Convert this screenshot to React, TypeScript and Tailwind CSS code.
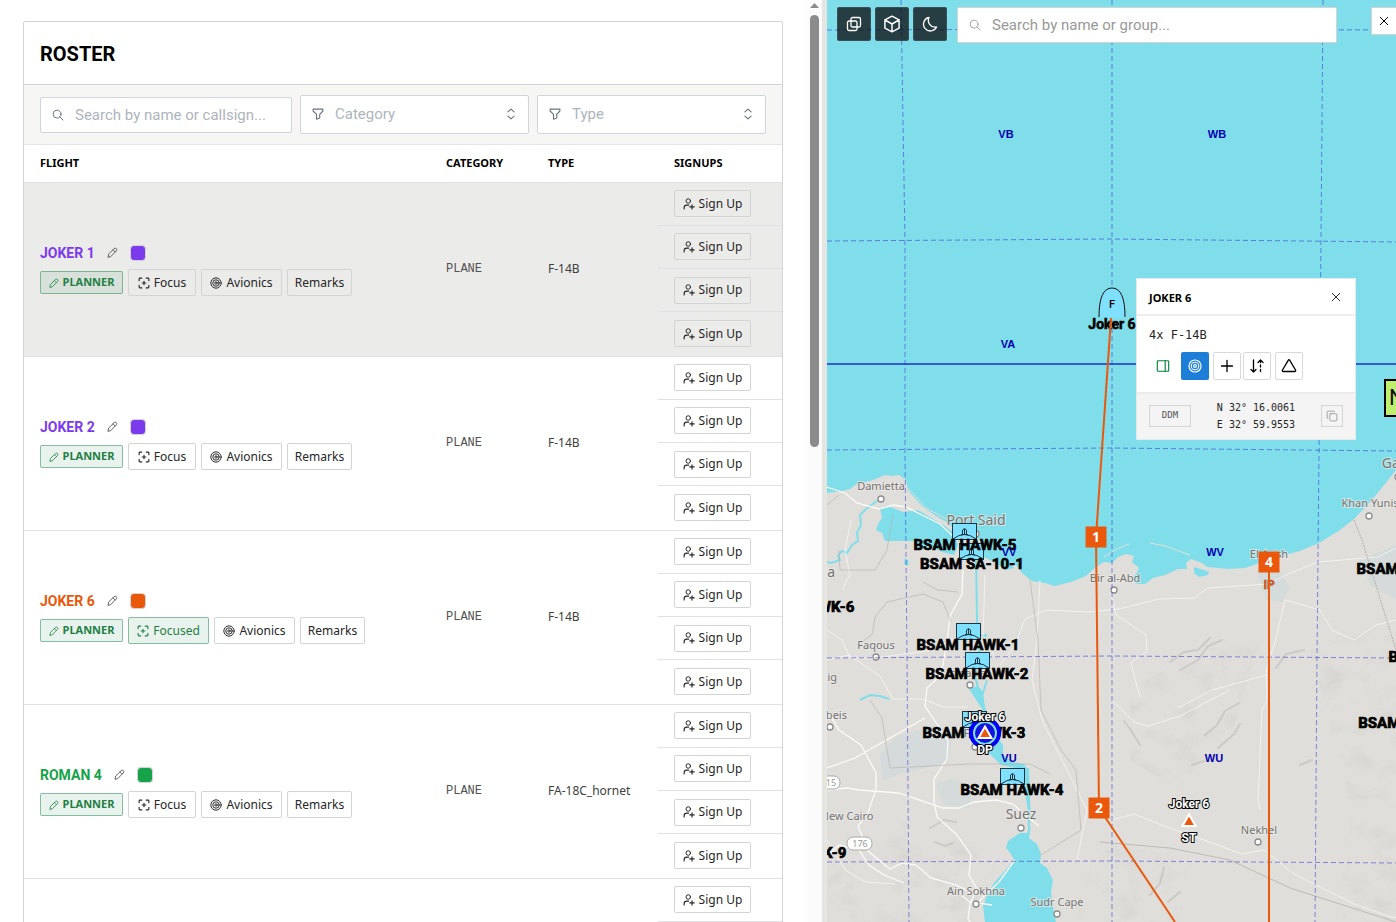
import { useState } from "react";
import type { ReactNode } from "react";

const flights = [
  { name: "JOKER 1", type: "F-14B", text: "text-[#7c3aed]", fill: "bg-[#7c3aed]", hovered: true },
  { name: "JOKER 2", type: "F-14B", text: "text-[#7c3aed]", fill: "bg-[#7c3aed]" },
  { name: "JOKER 6", type: "F-14B", text: "text-[#ea580c]", fill: "bg-[#ea580c]", focused: true },
  { name: "ROMAN 4", type: "FA-18C_hornet", text: "text-[#16a34a]", fill: "bg-[#16a34a]" },
  { name: "ROMAN 5", type: "FA-18C_hornet", text: "text-[#16a34a]", fill: "bg-[#16a34a]" },
];

function Icon({ className, children }: { className: string; children: ReactNode }) {
  return (
    <svg viewBox="0 0 16 16" className={className} fill="none" stroke="currentColor" strokeWidth="1.3" strokeLinecap="round" strokeLinejoin="round" aria-hidden="true">
      {children}
    </svg>
  );
}

const SearchIcon = ({ className }: { className: string }) => (
  <Icon className={className}><circle cx="6.8" cy="6.8" r="5.3" /><path d="M10.7 10.7l4 4" /></Icon>
);

const PencilIcon = ({ className }: { className: string }) => (
  <Icon className={className}>
    <path d="M1.500 14.500l1-4.400 7.900-7.700a2.200 2.200 0 0 1 3.100 0l.1.100a2.200 2.200 0 0 1 0 3.100l-7.700 7.900z" />
    <path d="M8.800 4.200l3 3" />
  </Icon>
);

const FocusIcon = () => (
  <Icon className="size-3">
    <path strokeWidth="1.500" d="M1.500 5V2.600q0-1.100 1.100-1.100H5M11 1.500h2.400q1.100 0 1.100 1.100V5M14.500 11v2.400q0 1.100-1.100 1.100H11M5 14.500H2.600q-1.100 0-1.100-1.100V11M8 5.600v4.800M5.600 8h4.800" />
  </Icon>
);

const RadarIcon = ({ className }: { className: string }) => (
  <Icon className={className}><circle cx="8" cy="8" r="6.9" /><circle cx="8" cy="8" r="4.3" /><circle cx="8" cy="8" r="1.6" /></Icon>
);

const UserPlusIcon = () => (
  <Icon className="size-3">
    <circle cx="7" cy="4" r="3" />
    <path strokeWidth="1.500" d="M1.500 14.500v-1.500q0-3.500 3.500-3.500h2.500M12 9v5.800M9.100 11.900h5.800" />
  </Icon>
);

const CloseIcon = ({ className }: { className: string }) => (
  <Icon className={className}><path d="M3 3l10 10M13 3L3 13" /></Icon>
);

function FilterSelect({ label }: { label: string }) {
  return (
    <div className="relative w-[229px]">
      <Icon className="pointer-events-none absolute left-3 top-[13px] size-3 text-gray-500">
        <path strokeWidth="1.500" d="M1.500 1.500h13v2.500L10.300 8.400v4.800L6 15V8.400L1.500 4z" />
      </Icon>
      <select aria-label={label} className="h-[39px] w-full appearance-none rounded-xs border border-[#d1d5db] bg-white pl-[34px] pr-8 text-[15px] text-[#adb5bd] outline-none">
        <option>{label}</option>
      </select>
      <Icon className="pointer-events-none absolute right-[11px] top-3 size-3.5 text-gray-500">
        <path d="M4.500 5.500L8 2.500l3.500 3M4.500 10.500L8 13.500l3.500-3" />
      </Icon>
    </div>
  );
}

const actionButton = "flex h-[27px] items-center justify-center gap-1 rounded-xs border text-xs";

function FlightCell({ flight }: { flight: (typeof flights)[number] }) {
  return (
    <div className="flex flex-col gap-1.5">
      <div className="flex h-[21px] items-center">
        <span className={`font-[Roboto,sans-serif] text-sm font-bold ${flight.text}`}>{flight.name}</span>
        <button type="button" aria-label={`Rename ${flight.name}`} className="mx-3 text-neutral-600"><PencilIcon className="size-[11px]" /></button>
        <button type="button" aria-label={`Colour of ${flight.name}`} className={`size-4 rounded-[4px] border border-neutral-300 ${flight.fill}`} />
      </div>
      <div className="flex items-center gap-[5px] text-neutral-800">
        <span className="flex h-[23px] w-[83px] items-center justify-center gap-1 rounded-xs border border-[#238551]/50 bg-[#238551]/10 text-[11px] font-bold text-[#1f7f45]">
          <PencilIcon className="size-2.5" />
          PLANNER
        </span>
        {flight.focused ? (
          <button type="button" className={`${actionButton} w-[81px] border-[#238551]/50 bg-[#238551]/10 text-[#1f7f45]`}><FocusIcon />Focused</button>
        ) : (
          <button type="button" className={`${actionButton} w-[68px] border-neutral-300`}><FocusIcon />Focus</button>
        )}
        <button type="button" className={`${actionButton} w-[81px] border-neutral-300`}><RadarIcon className="size-3" />Avionics</button>
        <button type="button" className={`${actionButton} w-[65px] border-neutral-300`}>Remarks</button>
      </div>
    </div>
  );
}

function Roster() {
  const [query, setQuery] = useState("");
  return (
    <section className="ml-[23px] mr-6 mt-[21px] rounded-xs border border-neutral-300">
      <h1 className="flex h-[63px] items-center border-b border-neutral-300 px-4 pt-0.5 text-xl font-bold text-black">ROSTER</h1>
      <div className="flex h-[60px] items-center gap-2 border-b border-neutral-200 bg-[#f6f6f4] px-4">
        <div className="relative min-w-0 flex-1">
          <SearchIcon className="pointer-events-none absolute left-3 top-3 size-3 text-gray-500" />
          <input aria-label="Search flights" value={query} onChange={(e) => setQuery(e.target.value)} placeholder="Search by name or callsign..." className="h-9 w-full rounded-xs border border-[#d1d5db] bg-white pl-[34px] text-[15px] outline-none placeholder:text-[#adb5bd]" />
        </div>
        <FilterSelect label="Category" />
        <FilterSelect label="Type" />
      </div>
      <table className="w-full table-fixed border-collapse text-left font-['Noto_Sans',sans-serif]">
        <thead>
          <tr className="h-[37px] border-b border-[#dfe1e5] text-[11px] text-black">
            <th className="pl-4">FLIGHT</th>
            <th className="w-[102px] pl-4">CATEGORY</th>
            <th className="w-[126px] pl-4">TYPE</th>
            <th className="w-[124px] pl-4">SIGNUPS</th>
          </tr>
        </thead>
        <tbody>
          {flights.map((flight) => (
            <tr key={flight.name} className={flight.hovered ? "border-b border-[#dfe1e5] bg-[#ebebea]" : "border-b border-[#dfe1e5]"}>
              <td className="pl-4"><FlightCell flight={flight} /></td>
              <td className="pl-4 font-['Liberation_Mono',monospace] text-xs text-neutral-600">PLANE</td>
              <td className="pl-4 text-xs text-neutral-700">{flight.type}</td>
              <td className="p-0">
                <ul className="grid h-[173px] grid-rows-4 divide-y divide-[#dfe1e5]">
                  {[1, 2, 3, 4].map((slot) => (
                    <li key={slot} className="flex items-center pl-4">
                      <button type="button" className="flex h-[27px] w-[77px] items-center justify-center gap-1 rounded-xs border border-neutral-300 text-xs text-neutral-800">
                        <UserPlusIcon />
                        Sign Up
                      </button>
                    </li>
                  ))}
                </ul>
              </td>
            </tr>
          ))}
        </tbody>
      </table>
    </section>
  );
}

const gridLabels: [string, number, number][] = [
  ["VB", 1006, 138], ["WB", 1217, 138], ["VA", 1008, 348], ["VV", 1009, 556],
  ["WV", 1215, 556], ["VU", 1009, 762], ["WU", 1214, 762],
];

const towns: { name: string; x: number; y: number; big?: boolean; dot?: [number, number] }[] = [
  { name: "Damietta", x: 881, y: 490, dot: [881, 499] },
  { name: "Port Said", x: 976, y: 525, big: true, dot: [976, 534] },
  { name: "Faqous", x: 876, y: 649, dot: [876, 657] },
  { name: "New Cairo", x: 847, y: 820 },
  { name: "Suez", x: 1021, y: 819, big: true, dot: [1021, 828] },
  { name: "Ain Sokhna", x: 976, y: 895, dot: [976, 904] },
  { name: "Sudr Cape", x: 1057, y: 906, dot: [1057, 914] },
  { name: "Bir al-Abd", x: 1115, y: 582, dot: [1114, 590] },
  { name: "El Arish", x: 1269, y: 558 },
  { name: "Khan Yunis", x: 1370, y: 507, dot: [1369, 516] },
  { name: "Gaza", x: 1398, y: 468, big: true, dot: [1398, 477] },
  { name: "Nekhel", x: 1259, y: 834, dot: [1258, 842] },
  { name: "Ismailia", x: 966, y: 677, dot: [970, 685] },
  { name: "Fayed", x: 979, y: 737, dot: [975, 747] },
  { name: "Tanta", x: 817, y: 577, big: true },
  { name: "Zagazig", x: 817, y: 681 },
  { name: "Bilbeis", x: 830, y: 719, dot: [830, 727] },
];

const sites: { name: string; x: number; y: number; box?: [number, number] }[] = [
  { name: "BSAM SA-10-1", x: 972, y: 569, box: [959, 543] },
  { name: "BSAM HAWK-5", x: 965, y: 550, box: [952, 523] },
  { name: "BSAM HAWK-6", x: 803, y: 612 },
  { name: "BSAM HAWK-1", x: 968, y: 650, box: [956, 623] },
  { name: "BSAM HAWK-2", x: 977, y: 679, box: [965, 652] },
  { name: "BSAM HAWK-3", x: 974, y: 738, box: [962, 711] },
  { name: "BSAM HAWK-4", x: 1012, y: 795, box: [1000, 768] },
  { name: "BSAM HAWK-9", x: 795, y: 858 },
  { name: "BSAM HAWK-7", x: 1408, y: 574 },
  { name: "BSAM HAWK-8", x: 1440, y: 662 },
  { name: "BSAM HAWK-10", x: 1414, y: 728 },
];

const waypoints: [string, number, number][] = [["1", 1096, 537], ["2", 1099, 808], ["4", 1269, 562]];

const points: [string, string, number, number, number, number][] = [
  ["Joker 6", "DP", 985, 733, 721, 754],
  ["Joker 6", "ST", 1189, 821, 808, 842],
];

function MapCanvas() {
  return (
    <svg viewBox="827 0 569 922" preserveAspectRatio="xMidYMid slice" className="absolute inset-0 size-full" role="img" aria-label="Theater map">
      <defs>
        <filter id="relief" x="0" y="0" width="100%" height="100%">
          <feTurbulence type="fractalNoise" baseFrequency="0.035 0.045" numOctaves="5" seed="8" />
          <feColorMatrix values="0 0 0 0 0.5  0 0 0 0 0.49  0 0 0 0 0.47  1.2 0 0 0 -0.6" />
          <feComposite in2="SourceGraphic" operator="in" />
        </filter>
      </defs>
      <rect x="827" y="0" width="569" height="922" fill="#80deea" />

      {/* land */}
      <path fill="#e0deda" d="M827 493L842 491 850 489 858 483 870 481 878 478 885 475 892 476 899 475 906 480 908 490 914 497 923 507 936 516 948 523 956 530 970 530 980 541 990 551 1003 558 1015 564 1022 573 1032 581 1045 583 1055 586 1071 582 1086 576 1096 567 1104 562 1112 563 1118 557 1126 554 1134 556 1132 562 1139 568 1136 574 1131 578 1137 584 1145 584 1153 578 1165 575 1178 569 1187 569 1186 563 1191 559 1202 563 1207 567 1228 569 1245 568 1262 562 1285 555 1300 551 1319 543 1340 530 1354 519 1371 501 1385 484 1396 470V922H827z" />
      <path filter="url(#relief)" opacity="0.5" d="M1130 690L1200 650 1260 640 1230 740 1180 790 1130 760zM1310 650L1396 620V922H1330L1350 800zM1100 840L1190 860 1180 922H1070zM900 820L1000 850 980 922H827V880z" />
      <g fill="none" stroke="#c4c2be" strokeWidth="2" strokeLinecap="round" opacity="0.7">
        <path d="M1170 662l14-10 14-2 12-12M1180 670l18-10 10-14 14-6M1276 668l10-14 18-4M1205 735l12-10 8-14 14-8M1218 748l16-14 6-10M1192 765l12-4M1300 765l12-5M1140 745l-10-16-6-8M1150 895l10-12 4-16M1168 902l12-10M930 828l14-8 12 2M935 842l10 4 8-3" />
      </g>

      {/* inland water and the canal */}
      <g fill="#80deea">
        <path d="M880 508L888 506 903 512 918 510 930 517 945 526 954 533 958 545 954 555 942 552 930 546 920 550 915 541H885L882 533 876 530 879 522 882 518z" />
        <path d="M981 545L995 553 1008 558 1014 568 1006 570 994 562 984 557z" />
        <path d="M905 558l4 3-1 5-4-2zM980 635l8-1-3 4zM969 689l9-3 5 6 2 20-5-6-5-8z" />
        <path d="M984 715L994 732 1003 745 1003 755 1012 762 1024 764 1029 771 1030 800 1031 824 1026 800 1025 778 1016 768 1001 765 991 755 982 749 976 744z" />
        <path d="M1020 833L1008 841 1006 848 1011 854 1014 860 1004 872 994 883 988 893 983 906 985 922H1056L1053 907 1051 893 1053 880 1047 868 1040 863 1041 854 1037 844 1029 838 1031 826 1027 833z" />
        <path d="M1194 567l10 3 5 2-1 3-9 2-5-4z" />
      </g>
      <g fill="none" stroke="#80deea">
        <path strokeWidth="2" d="M976 555l1 65 3 35-4 25 7 26 2 12M987 680l-5 16 4 20M1028 768l1 66" />
        <path strokeWidth="2" d="M882 498l-8 5-8 6-6 6 1 10-4 8 1 8-6 4-5 8-5-2-4 5 2 4-9 3-4-1M860 700l10-5 10 1 9 3" />
      </g>
      <g fill="#b9d5da" opacity="0.3">
        <path d="M880 755l15-18 40-12 18 8-5 30-45 10-20 8zM935 784l20-6 18 12-4 18-25-3zM1256 570l18-8 16 25-8 15-16-2zM1360 560l36-15v55l-26-15z" />
      </g>
      <path fill="none" stroke="#e0deda" strokeWidth="1" d="M1104 557l15-9 10-4M1150 543l15 3 25 9M908 488l18 20 26 14" />

      {/* roads */}
      <g fill="none" stroke="#fafaf8" strokeWidth="1.3">
        <path d="M827 487l18 6 12 10 22 6 15-4 12 2 14 7 20 10 15 14M963 570l-1 24-12 22-2 18-5 30-3 12-13 12-2 18 12 18 11 17-1 18-13 20v22l3 16 20 18 14 20-2 20 8 14-7 15-2 15 14 20" />
        <path d="M827 790l20-2 12 2 40 3 44 15h16l15-6 22-2 17 4 13 12 13 10M925 718l-35 20-35 20-28 10M827 710l12 20 22 15 15 28v16l-8 24-10 13 10 25 22 18 12-6 14 2 15 13 25 7 21 10M992 905l-22-3-8-6M976 904l23-22 16-22M827 857l12-12 20 5 10 15 15 10 20 8" />
        <path opacity="0.7" strokeWidth="1" d="M1000 665l15-20 10-26 22-9 40 2 32-3 40-10 35-1 14-10 60-4 20-10 30-12 60-5 30-15 15-28M1110 590l6 25 30 20 1 16-16 12 3 12 6 22M1285 600l-10 42-9 28 1 30-5 10-4 90 2 10M1285 600l35 10 12 20 22 10 22-15 20-5M1112 700l22 22 14 4 32-10 50-26M1112 820l22-6 30 12 40 14 38 14 22-4 30 24 60 30 40 14 12-10M1267 675l-55 15-34 18M1040 580l-3 60-5 40 10 40 30 60 15 30-10 50" />
        <path opacity="0.7" strokeWidth="1" d="M827 630l15 10 8 18 25 0 60-8 18-12M827 840l18 30 20 12 30 2M851 520l-6 30 5 25-8 15M827 660l22-5 30 20 14 24h30l20 8h25M985 575l-2 60 12 22" />
      </g>
      <g fill="none" stroke="#b4b1ab" strokeWidth="1">
        <path opacity="0.6" d="M827 505l12-10M839 550l1 20 35 0 12-20 6-35M857 645l15-10 3-18 12-15 36-8 20 8 8 20M923 582l15 8 20 2M1030 580l8 60 3 70 20 40 15 20 5 60-40 25M870 700l12 18 8 50 80-4 60 0 20 10" />
        <path opacity="0.8" d="M1100 842l70 6 60 12 60 28 106 34" />
        <path strokeDasharray="2 1" d="M1354 520l8 20 20 65 14 45" />
      </g>
      <g fill="#9a9994" fontSize="9" textAnchor="middle" fontFamily="'Noto Sans', sans-serif">
        <rect x="815" y="776" width="25" height="13" rx="6" fill="#fff" stroke="#aaa9a6" />
        <text x="831" y="786">15</text>
        <rect x="847" y="837" width="25" height="13" rx="6" fill="#fff" stroke="#aaa9a6" />
        <text x="860" y="847">176</text>
      </g>

      {/* towns */}
      <g textAnchor="middle" fontFamily="'Noto Sans', sans-serif" fill="#747474">
        {towns.map((t) => (
          <g key={t.name}>
            {t.dot && <circle cx={t.dot[0]} cy={t.dot[1]} r="3" fill="#fff" stroke="#8c8c8c" strokeWidth="1.3" />}
            <text x={t.x} y={t.y} fontSize={t.big ? 14 : 11} stroke="#eceae7" strokeOpacity="0.7" strokeWidth="2" paintOrder="stroke">{t.name}</text>
          </g>
        ))}
      </g>

      {/* MGRS grid */}
      <g fill="none" stroke="#2323cd" strokeOpacity="0.5" strokeDasharray="5 3">
        <path d="M901 0L905 240 905 450 907 658 909 922M1112 0V922M1323 0L1321 240 1319 450 1317 658 1315 922" />
        <path d="M827 30L1112 29 1396 30M827 241L1112 239 1396 242M827 450L1112 448 1396 451M827 658L1112 656 1396 658M827 862L1112 861 1396 863" />
      </g>
      <path d="M827 364H1396" stroke="#1c2fc4" strokeWidth="1.5" />

      {/* air defence sites */}
      {sites.map((s) => s.box && (
        <g key={s.name} transform={`translate(${s.box[0]} ${s.box[1]})`} fill="none" stroke="#1c3540">
          <rect x="0.5" y="0.5" width="24" height="16" fill="#80e0ff" />
          <path d="M1 16q11.500-9 23 0M10.500 11V7q2-3 4 0v4M9 11.500h7M12.500 6v5" />
        </g>
      ))}
      <g textAnchor="middle" fontFamily="Roboto, sans-serif" fontSize="15" fontWeight="800" fill="#000" stroke="#000" strokeWidth="0.6">
        {sites.map((s) => <text key={s.name} x={s.x} y={s.y}>{s.name}</text>)}
      </g>
      <g textAnchor="middle" fontFamily="'Liberation Sans', sans-serif" fontSize="11" fontWeight="700" fill="#0000b0">
        {gridLabels.map(([name, x, y]) => <text key={name} x={x} y={y}>{name}</text>)}
      </g>

      {/* selected flight */}
      <path d="M1099 317q0-29 13-29t13 29" fill="#80e0ff" stroke="#111" />
      <g textAnchor="middle" fontFamily="Roboto, sans-serif" fontWeight="700">
        <text x="1112" y="308" fontSize="11" fontWeight="500">F</text>
        <text x="1112" y="329" fontSize="14" stroke="#000" strokeWidth="0.6">Joker 6</text>
        <text x="1269" y="589" fontSize="12" fill="#ea580c" stroke="#8a5a40" strokeWidth="0.5">IP</text>
      </g>
      <path d="M1111 318L1096 537 1099 808 1175 922M1269 562V922" fill="none" stroke="#ea580c" strokeWidth="2" />
      {waypoints.map(([label, x, y]) => (
        <g key={label} textAnchor="middle" fontFamily="'Noto Sans', sans-serif">
          <rect x={x - 10.5} y={y - 10.5} width="21" height="21" fill="#ea580c" />
          <text x={x} y={y + 5} fontSize="14" fontWeight="700" fill="#fff">{label}</text>
        </g>
      ))}
      <circle cx="985" cy="733" r="14" fill="#80deea" stroke="#0000f5" strokeWidth="4" />
      <circle cx="985" cy="733" r="10" fill="#1414e0" />
      {points.map(([owner, label, x, y, top, bottom]) => (
        <g key={label} textAnchor="middle" fontFamily="Roboto, sans-serif" fontSize="12" fontWeight="700" fill="#fff">
          <path transform={`translate(${x} ${y})`} d="M0-6.500l6.500 11.500H-6.500z" fill="#ea580c" stroke="#fff" strokeWidth="2" />
          <text x={x} y={top} stroke="#000" strokeWidth="2" paintOrder="stroke">{owner}</text>
          <text x={x} y={bottom} stroke="#000" strokeWidth="2" paintOrder="stroke">{label}</text>
        </g>
      ))}
      <rect x="1385" y="380" width="40" height="36" fill="#bef06e" stroke="#000" strokeWidth="2" />
      <text x="1389" y="405" fontFamily="Roboto, sans-serif" fontSize="22" fill="#111">N</text>
    </svg>
  );
}

const mapButton = "flex size-[34px] items-center justify-center rounded-xs border border-white/10 bg-[#0f1419]/80 text-white";

function MapToolbar() {
  const [query, setQuery] = useState("");
  return (
    <div className="absolute inset-x-0 top-[7px] flex items-start pl-2.5">
      <div className="flex gap-1">
        <button type="button" aria-label="Layers" className={mapButton}>
          <Icon className="size-4"><rect x="1.500" y="5" width="9.500" height="9.500" rx="1.500" /><rect x="5" y="1.500" width="9.500" height="9.500" rx="1.500" /></Icon>
        </button>
        <button type="button" aria-label="3D view" className={mapButton}>
          <Icon className="size-[18px]"><path d="M8 1l6.300 3.300v7.400L8 15l-6.300-3.300V4.300zM1.700 4.300L8 8l6.300-3.700M8 8v7" /></Icon>
        </button>
        <button type="button" aria-label="Dark mode" className={mapButton}>
          <Icon className="size-4"><path d="M7 1.500A6.800 6.800 0 1 0 14.500 11 6.800 6.800 0 0 1 7 1.500z" /></Icon>
        </button>
      </div>
      <div className="relative ml-2.5 min-w-0 flex-1">
        <SearchIcon className="pointer-events-none absolute left-3 top-3 size-3 text-neutral-400" />
        <input aria-label="Search map" value={query} onChange={(e) => setQuery(e.target.value)} placeholder="Search by name or group..." className="h-9 w-full rounded-xs border border-neutral-300 bg-white pl-[34px] text-[15px] outline-none placeholder:text-[#999]" />
      </div>
      <button type="button" aria-label="Close search" className="ml-[34px] flex h-7 w-[25px] items-center justify-center rounded-l-xs border-y border-l border-neutral-300 bg-white text-black">
        <CloseIcon className="size-3" />
      </button>
    </div>
  );
}

const toolButton = "flex size-7 items-center justify-center rounded-xs border border-[#d6dae0] text-black";

function FlightPopup() {
  return (
    <div className="absolute right-10 top-[278px] flex w-[220px] flex-col border border-[#e8e8e8] bg-white font-['DejaVu_Sans_Mono',monospace] text-neutral-800">
      <div className="flex h-[37px] items-center justify-between border-b-2 border-[#eeeeee] pl-3 pr-[13px]">
        <h2 className="pt-1 font-['Noto_Sans',sans-serif] text-[11px] font-bold text-black">JOKER 6</h2>
        <button type="button" aria-label="Close"><CloseIcon className="size-3" /></button>
      </div>
      <div className="flex h-[76px] flex-col gap-[9px] px-3 pt-[11px]">
        <p className="text-xs leading-4">4x F-14B</p>
        <div className="flex gap-0.5">
          <button type="button" aria-label="Open details" className="flex size-7 items-center justify-center text-green-700">
            <Icon className="size-3.5"><rect x="1.500" y="2" width="13" height="12" rx="1" /><path d="M10.500 2v12" /></Icon>
          </button>
          <button type="button" aria-label="Avionics" className="mx-0.5 flex size-7 items-center justify-center rounded-xs bg-[#1c7ed6] text-white"><RadarIcon className="size-3.5" /></button>
          <button type="button" aria-label="Add waypoint" className={toolButton}><Icon className="size-4"><path d="M8 2.500v11M2.500 8h11" /></Icon></button>
          <button type="button" aria-label="Reorder" className={toolButton}>
            <Icon className="size-4"><path d="M4.500 2v12M2 11.500L4.500 14 7 11.500M9 4.500L11.500 2 14 4.500" /><path strokeDasharray="2 2.500" d="M11.500 2.500V14" /></Icon>
          </button>
          <button type="button" aria-label="Add point" className="ml-0.5 flex size-7 items-center justify-center rounded-xs border border-[#d6dae0] text-black">
            <Icon className="size-4"><path d="M7.200 2.300q.8-1.200 1.600 0l5.700 9.700q.6 1.500-1 1.500h-11q-1.600 0-1-1.500z" /></Icon>
          </button>
        </div>
      </div>
      <div className="flex h-[47px] items-center justify-between border-t-2 border-[#ececec] bg-[#f4f4f4] px-3 pb-0.5">
        <button type="button" className="h-[22px] w-[42px] border border-neutral-300 text-[9px] text-neutral-600">DDM</button>
        <p className="text-[10px] leading-[17px] whitespace-pre">{"N 32° 16.0061\nE 32° 59.9553"}</p>
        <button type="button" aria-label="Copy coordinates" className="flex size-[22px] items-center justify-center border border-neutral-300 text-neutral-400">
          <Icon className="size-3"><rect x="5" y="5" width="9.500" height="9.500" rx="1.500" /><path d="M11.500 2.500q0-1-1-1h-7.500q-1.500 0-1.500 1.500v7.500q0 1 1 1" /></Icon>
        </button>
      </div>
    </div>
  );
}

export default function App() {
  return (
    <main className="grid h-screen grid-cols-[minmax(0,822fr)_5px_minmax(0,569fr)] overflow-hidden bg-white font-[Roboto,sans-serif]">
      <div className="flex min-h-0">
        <div className="min-w-0 flex-1 overflow-y-auto [scrollbar-width:none]"><Roster /></div>
        <div className="flex w-[15px] flex-col items-center gap-[7px] bg-[#fbfbfb] pt-[3px]" aria-hidden="true">
          <svg viewBox="0 0 9 5" className="h-[5px] w-[9px] fill-[#8b8b8b]"><path d="M0 5L4.500 0 9 5z" /></svg>
          <div className="h-[47%] w-[9px] rounded-full bg-[#8b8b8b]" />
        </div>
      </div>
      <div className="bg-[#e5e5e2]" />
      <div className="relative min-h-0 overflow-hidden">
        <MapCanvas />
        <MapToolbar />
        <FlightPopup />
      </div>
    </main>
  );
}
